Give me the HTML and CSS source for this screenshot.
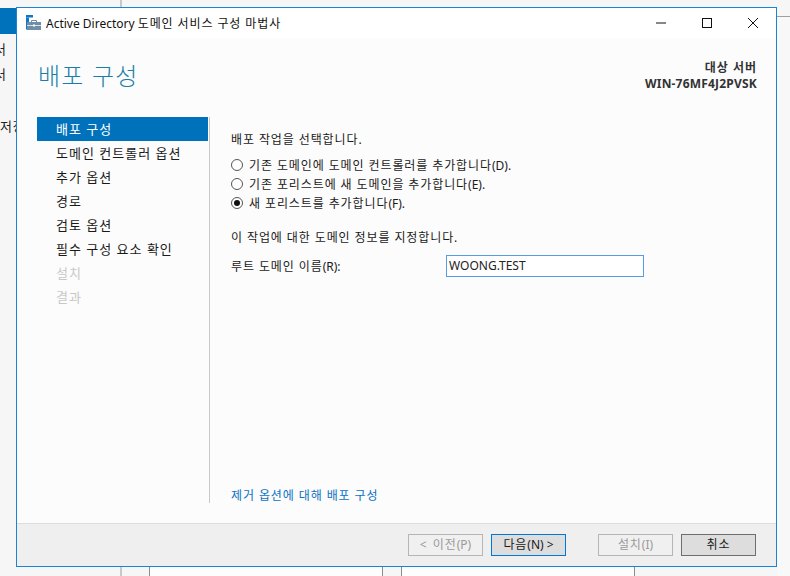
FILE: index.html
```html
<!DOCTYPE html>
<html lang="ko">
<head>
<meta charset="utf-8">
<title>Active Directory 도메인 서비스 구성 마법사</title>
<link rel="stylesheet" href="styles.css">
</head>
<body>
<div class="desktop">
  <div class="behind-sel"></div>
  <div class="behind-text t1">서</div>
  <div class="behind-text t2">서</div>
  <div class="behind-text t3">저장</div>
  <div class="side-panel"></div>
  <div class="vline v1"></div>
  <div class="cell c1"></div>
  <div class="cell c2"></div>
  <div class="hline"></div>

  <div class="window">
    <header class="titlebar">
      <svg class="app-icon" width="16" height="16" viewBox="0 0 16 16">
        <rect x="0" y="0" width="7" height="2.5" fill="#0b78c9"/>
        <rect x="0" y="2.5" width="3" height="12" fill="#0b78c9"/>
        <rect x="1" y="7" width="14" height="8" fill="#6e8ea6"/>
        <rect x="1" y="10" width="14" height="1" fill="#d8e2ea"/>
        <path d="M5.5 7V5.5h5V7" fill="none" stroke="#6e8ea6" stroke-width="1"/>
        <rect x="7" y="9.5" width="2" height="2" fill="#fff"/>
      </svg>
      <span class="title-text"><span class="lat">Active Directory </span>도메인 서비스 구성 마법사</span>
      <div class="controls">
        <svg class="ctl" width="46" height="30" viewBox="0 0 46 30"><path d="M18 15h10" stroke="#111" fill="none"/></svg>
        <svg class="ctl" width="46" height="30" viewBox="0 0 46 30"><rect x="18.5" y="10.5" width="9" height="9" stroke="#111" fill="none"/></svg>
        <svg class="ctl" width="46" height="30" viewBox="0 0 46 30"><path d="M18 10l10 10M28 10l-10 10" stroke="#111" fill="none"/></svg>
      </div>
    </header>

    <div class="head">
      <h1 class="page-title">배포 구성</h1>
      <div class="target">
        <div class="target-label">대상 서버</div>
        <div class="target-name">WIN-76MF4J2PVSK</div>
      </div>
    </div>

    <div class="main">
      <nav class="nav">
        <div class="nav-item active">배포 구성</div>
        <div class="nav-item">도메인 컨트롤러 옵션</div>
        <div class="nav-item">추가 옵션</div>
        <div class="nav-item">경로</div>
        <div class="nav-item">검토 옵션</div>
        <div class="nav-item">필수 구성 요소 확인</div>
        <div class="nav-item disabled">설치</div>
        <div class="nav-item disabled">결과</div>
      </nav>
      <section class="content">
        <div class="form">
          <p class="label-select">배포 작업을 선택합니다.</p>
          <div class="radios">
            <div class="radio-row"><span class="radio"></span><span>기존 도메인에 도메인 컨트롤러를 추가합니다<span class="lat">(D).</span></span></div>
            <div class="radio-row"><span class="radio"></span><span>기존 포리스트에 새 도메인을 추가합니다<span class="lat">(E).</span></span></div>
            <div class="radio-row"><span class="radio on"></span><span>새 포리스트를 추가합니다<span class="lat">(F).</span></span></div>
          </div>
          <p class="label-spec">이 작업에 대한 도메인 정보를 지정합니다.</p>
          <div class="field">
            <span class="field-label">루트 도메인 이름<span class="lat">(R):</span></span>
            <div class="input lat">WOONG.TEST</div>
          </div>
        </div>
        <a class="more">제거 옵션에 대해 배포 구성</a>
      </section>
    </div>

    <footer class="footer">
      <div class="btn disabled"><span class="lat arrow">&lt; </span>이전<span class="lat">(P)</span></div>
      <div class="btn focus">다음<span class="lat">(N) &gt;</span></div>
      <div class="btn disabled gap">설치<span class="lat">(I)</span></div>
      <div class="btn normal">취소</div>
    </footer>
  </div>
</div>
</body>
</html>
```
FILE: styles.css
```css
* { box-sizing: border-box; }
html, body { margin: 0; padding: 0; }
body {
  width: 790px;
  height: 576px;
  overflow: hidden;
  font-family: "Noto Sans", "Noto Sans CJK KR", sans-serif;
  font-size: 12px;
  letter-spacing: 0.9px;
  color: #1a1a1a;
}
.lat { letter-spacing: 0; }
.desktop {
  position: relative;
  width: 790px;
  height: 576px;
  background: #f6f6f6;
  overflow: hidden;
}
.behind-sel { position: absolute; left: 0; top: 8px; width: 16px; height: 26px; background: #0072bc; }
.behind-text { position: absolute; font-size: 13px; line-height: 16px; color: #222; }
.t1 { left: -6px; top: 41px; }
.t2 { left: -6px; top: 66px; }
.t3 { left: 0; top: 118px; }
.side-panel { position: absolute; left: 777px; top: 16px; width: 13px; height: 560px; background: #f8f8f8; }
.vline { position: absolute; top: 0; width: 2px; height: 576px; background: #c8c8c8; }
.v1 { left: 120px; }
.cell {
  position: absolute;
  top: 567px;
  height: 9px;
  width: 234px;
  background: #fdfdfd;
  border-left: 1px solid #8c8c8c;
}
.c1 { left: 149px; border-right: 1px solid #8c8c8c; }
.c2 { left: 401px; border-right: 1px solid #8c8c8c; }
.hline { position: absolute; left: 777px; top: 16px; width: 13px; height: 1px; background: #a0a0a0; }

.window {
  position: absolute;
  left: 16px;
  top: 7px;
  width: 761px;
  height: 560px;
  background: #fcfcfc;
  border: 1px solid #1883d7;
  display: flex;
  flex-direction: column;
}
.titlebar {
  height: 30px;
  background: #fff;
  display: flex;
  align-items: center;
  padding-left: 9px;
  flex: none;
}
.app-icon { flex: none; margin-right: 4px; }
.title-text { flex: 1; color: #111; }
.controls { display: flex; flex: none; }
.ctl { display: block; }

.head {
  height: 79px;
  flex: none;
  display: flex;
  justify-content: space-between;
  padding: 0 19px 0 21px;
}
.page-title {
  margin: 20px 0 0;
  font-size: 24px;
  line-height: 36px;
  font-weight: 300;
  letter-spacing: 1.2px;
  color: #1a7fa8;
}
.target {
  margin-top: 22px;
  text-align: right;
  font-weight: 700;
  line-height: 16px;
  color: #333;
}
.target-label { letter-spacing: 1px; }
.target-name { letter-spacing: 0.2px; }

.main { flex: 1; display: flex; min-height: 0; }
.nav { width: 171px; margin-left: 20px; flex: none; }
.nav-item { height: 24px; line-height: 24px; padding-left: 19px; font-size: 13px; letter-spacing: 1px; color: #1a1a1a; }
.nav-item.active { background: #0072bc; color: #fff; }
.nav-item.disabled { color: #c8c8c8; }

.content {
  flex: 1;
  margin-left: 1px;
  margin-bottom: 20px;
  border-left: 1px solid #c8c8c8;
  padding-left: 21px;
  display: flex;
  flex-direction: column;
  justify-content: space-between;
}
.form { padding-top: 15px; }
.label-select { margin: 0; line-height: 16px; }
.radios { margin-top: 7px; }
.radio-row { display: flex; align-items: center; height: 19px; }
.radio {
  width: 12px;
  height: 12px;
  border: 1px solid #555;
  border-radius: 50%;
  margin-right: 6px;
  background: #fff;
  flex: none;
  display: flex;
  align-items: center;
  justify-content: center;
}
.radio.on::after { content: ""; width: 6px; height: 6px; border-radius: 50%; background: #111; }
.label-spec { margin: 18px 0 0; line-height: 16px; }
.field { display: flex; align-items: center; margin-top: 9px; }
.field-label { width: 215px; flex: none; }
.input {
  width: 198px;
  height: 22px;
  line-height: 20px;
  padding-left: 2px;
  background: #fff;
  border: 1px solid #569de5;
  color: #222;
}
.more { color: #0a72c4; line-height: 14px; }

.footer {
  height: 43px;
  flex: none;
  background: #efefef;
  border-top: 1px solid #dcdcdc;
  display: flex;
  justify-content: flex-end;
  align-items: flex-start;
  gap: 8px;
  padding: 10px 20px 0 0;
}
.btn {
  width: 75px;
  height: 22px;
  line-height: 20px;
  text-align: center;
  border: 1px solid #adadad;
  background: #dddddd;
}
.btn.disabled { background: #f0f0f0; border-color: #b5b5b5; color: #9a9a9a; }
.btn.focus { border-color: #0078d7; }
.btn.normal { border-color: #6e6e6e; }
.btn.gap { margin-left: 24px; }
.arrow { margin-right: 3px; }
```
